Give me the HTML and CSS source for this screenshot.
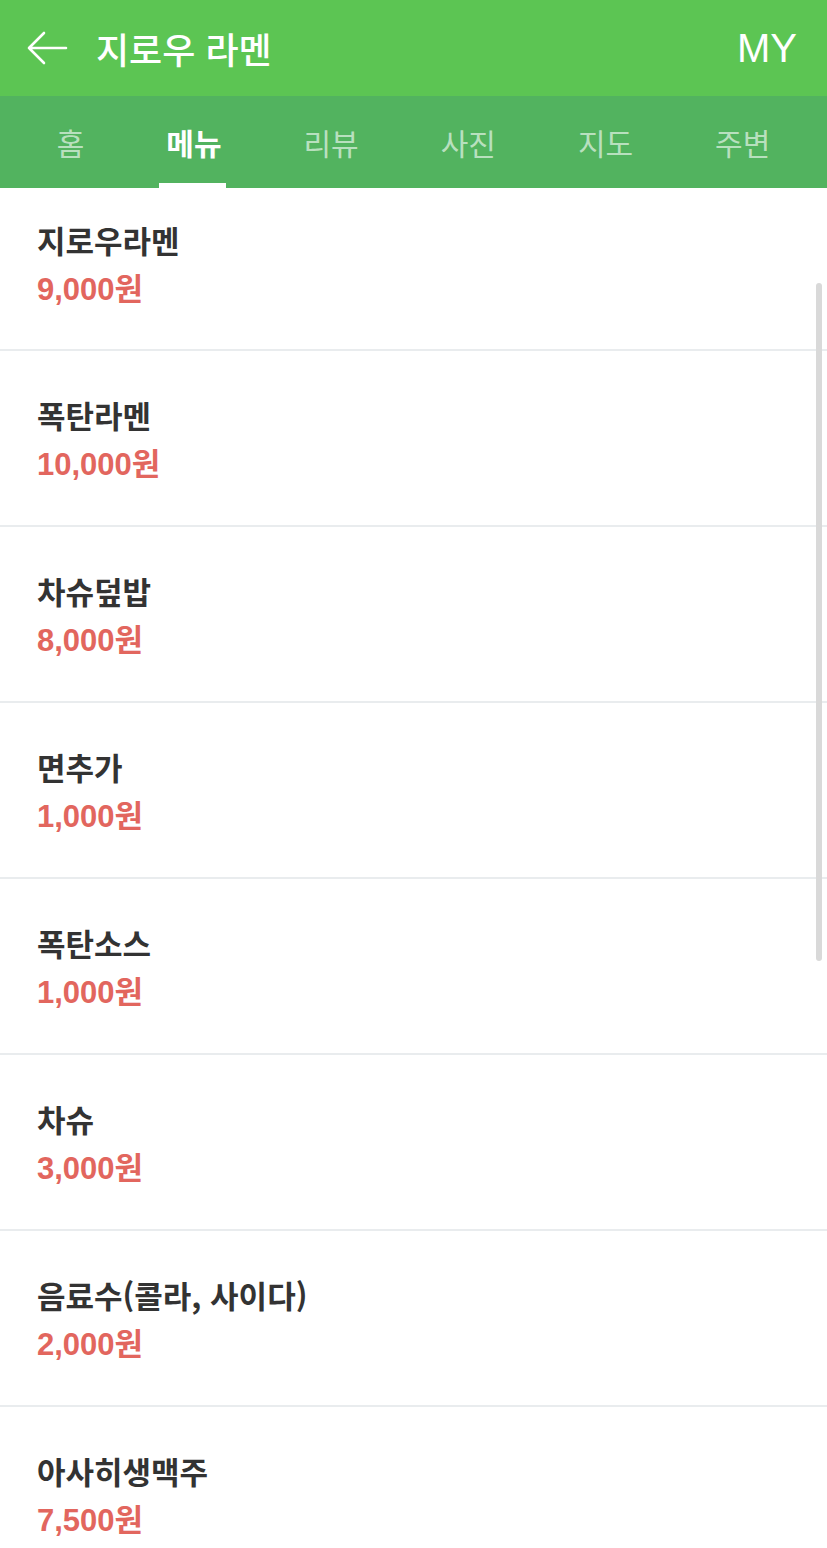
FILE: index.html
```html
<!DOCTYPE html>
<html lang="ko">
<head>
    <meta charset="UTF-8">
    <meta name="viewport" content="width=device-width, initial-scale=1.0">
    <title>지로우 라멘 - 메뉴</title>
    <link rel="stylesheet" href="styles.css">
</head>
<body>
    <header class="topbar">
        <div class="topbar-left">
            <svg class="back" width="42" height="36" viewBox="0 0 42 36">
                <path d="M40 18 H3 M18 3 L3 18 L18 33" fill="none" stroke="#fff" stroke-width="2.6" stroke-linecap="round" stroke-linejoin="round"/>
            </svg>
            <h1 class="title">지로우 라멘</h1>
        </div>
        <div class="my">MY</div>
    </header>

    <nav class="tabs">
        <div class="tab">홈</div>
        <div class="tab active">메뉴</div>
        <div class="tab">리뷰</div>
        <div class="tab">사진</div>
        <div class="tab">지도</div>
        <div class="tab">주변</div>
    </nav>

    <main class="menu-list">
        <div class="item">
            <div class="name">지로우라멘</div>
            <div class="price">9,000원</div>
        </div>
        <div class="item">
            <div class="name">폭탄라멘</div>
            <div class="price">10,000원</div>
        </div>
        <div class="item">
            <div class="name">차슈덮밥</div>
            <div class="price">8,000원</div>
        </div>
        <div class="item">
            <div class="name">면추가</div>
            <div class="price">1,000원</div>
        </div>
        <div class="item">
            <div class="name">폭탄소스</div>
            <div class="price">1,000원</div>
        </div>
        <div class="item">
            <div class="name">차슈</div>
            <div class="price">3,000원</div>
        </div>
        <div class="item">
            <div class="name">음료수(콜라, 사이다)</div>
            <div class="price">2,000원</div>
        </div>
        <div class="item">
            <div class="name">아사히생맥주</div>
            <div class="price">7,500원</div>
        </div>
        <div class="scrollbar"></div>
    </main>
</body>
</html>
```

FILE: styles.css
```css
* {
    box-sizing: border-box;
}
body {
    margin: 0;
    background: #fff;
    font-family: "Liberation Sans", "Noto Sans CJK KR", sans-serif;
    overflow: hidden;
}
.topbar {
    height: 96px;
    background-color: #5cc553;
    display: flex;
    align-items: center;
    justify-content: space-between;
    padding: 0 30px 0 26px;
    color: #fff;
}
.topbar-left {
    display: flex;
    align-items: center;
    gap: 28px;
}
.back {
    display: block;
}
.title {
    margin: 0;
    font-family: "Noto Sans CJK KR", sans-serif;
    font-size: 36px;
    font-weight: 500;
}
.my {
    font-size: 40px;
    line-height: 1;
}
.tabs {
    height: 92px;
    background-color: #52b35f;
    display: flex;
    justify-content: center;
}
.tab {
    position: relative;
    padding: 0 41px;
    display: flex;
    align-items: center;
    font-family: "Noto Sans CJK KR", sans-serif;
    font-size: 30px;
    color: rgba(255, 255, 255, 0.62);
}
.tab.active {
    color: #fff;
    font-weight: 700;
}
.tab.active::after {
    content: "";
    position: absolute;
    left: 34px;
    right: 37px;
    bottom: 0;
    height: 5px;
    background: #fff;
}
.menu-list {
    position: relative;
}
.item {
    height: 176px;
    padding: 44px 37px 0;
    border-bottom: 2px solid #e9ecee;
}
.item:first-child {
    height: 163px;
    padding-top: 32px;
}
.name {
    font-family: "Noto Sans CJK KR", sans-serif;
    font-size: 31px;
    line-height: 40px;
    font-weight: 700;
    color: #333;
}
.price {
    margin-top: 10px;
    font-size: 31px;
    line-height: 40px;
    font-weight: 700;
    color: #e2665e;
}
.scrollbar {
    position: absolute;
    top: 95px;
    right: 5px;
    width: 6px;
    height: 678px;
    border-radius: 3px;
    background: #d9d9d9;
}
```
